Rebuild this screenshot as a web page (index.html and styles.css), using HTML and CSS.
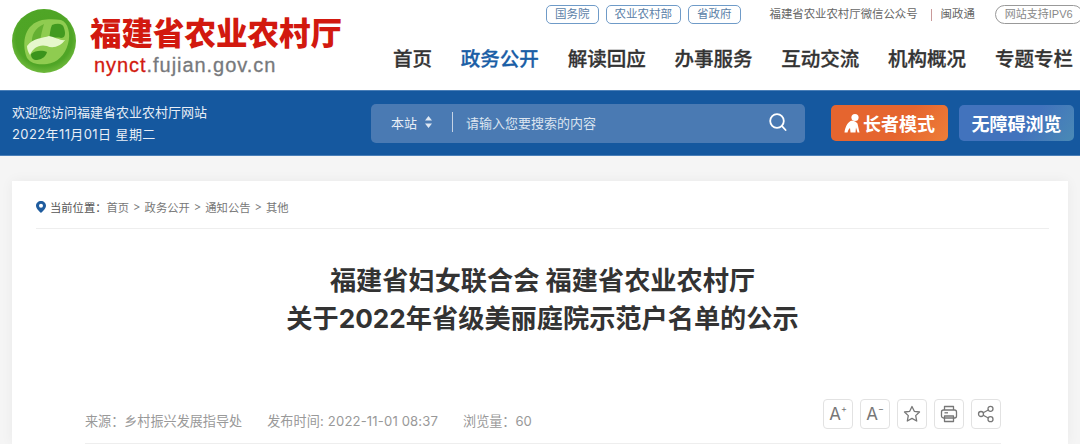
FILE: index.html
```html
<!DOCTYPE html>
<html lang="zh-CN">
<head>
    <meta charset="UTF-8">
    <title>福建省农业农村厅</title>
    <link rel="stylesheet" href="styles.css">
</head>
<body>
    <header class="top">
        <div class="logo">
            <svg class="logo-mark" width="66" height="66" viewBox="0 0 66 66">
                <defs>
                    <radialGradient id="ball" cx="50%" cy="45%" r="55%">
                        <stop offset="0" stop-color="#4ea324"/>
                        <stop offset="0.8" stop-color="#4fa526"/>
                        <stop offset="1" stop-color="#6fb93c"/>
                    </radialGradient>
                </defs>
                <circle cx="33" cy="33" r="32" fill="url(#ball)"/>
                <path d="M16 50C10 34 14 16 31 12C36 11 44 11 50 12C57 14 60 26 57 36C54 47 46 55 36 56C28 57 20 56 16 50Z" fill="#8fcc50"/>
                <path d="M41 17C46 15 52 15 53 20C55 26 54 30 50 30C46 29 42 30 38 31C39 26 39 21 41 17Z" fill="#429a20"/>
                <path d="M20 46C24 42 32 42 36 44C35 48 32 51 26 52C22 52 20 50 20 46Z" fill="#3b931c"/>
                <path d="M21 36C20 27 24 20 33 16C31 22 30 28 29 32C26 33 23 34 21 36Z" fill="#64b032"/>
                <path d="M16 38C22 30 32 30 38 28C44 29 50 33 54 32C50 38 42 41 36 38C28 36 22 40 19 47C17 44 16 41 16 38Z" fill="#e6f7cc"/>
            </svg>
            <div class="logo-text">
                <div class="logo-name">福建省农业农村厅</div>
                <div class="logo-url"><span>nynct</span>.fujian.gov.cn</div>
            </div>
        </div>
        <div class="top-right">
            <div class="links">
                <a class="pill">国务院</a>
                <a class="pill">农业农村部</a>
                <a class="pill">省政府</a>
                <span class="link wechat">福建省农业农村厅微信公众号</span>
                <span class="sep"></span>
                <span class="link">闽政通</span>
                <span class="ipv6">网站支持IPV6</span>
            </div>
            <nav class="nav">
                <a>首页</a>
                <a class="active">政务公开</a>
                <a>解读回应</a>
                <a>办事服务</a>
                <a>互动交流</a>
                <a>机构概况</a>
                <a>专题专栏</a>
            </nav>
        </div>
    </header>

    <div class="band">
        <div class="welcome">
            <div>欢迎您访问福建省农业农村厅网站</div>
            <div class="today">2022年11月01日 星期二</div>
        </div>
        <div class="search">
            <span class="scope">本站</span>
            <svg class="updown" width="7" height="12" viewBox="0 0 7 12"><path d="M3.5 0L7 4.5H0ZM3.5 12L0 7.5H7Z" fill="#dfe8f3"/></svg>
            <span class="search-line"></span>
            <span class="search-hint">请输入您要搜索的内容</span>
            <svg class="search-icon" width="20" height="20" viewBox="0 0 20 20" fill="none" stroke="#fff" stroke-width="1.8" stroke-linecap="round"><circle cx="9" cy="9" r="6.8"/><path d="M14 14.2L17.6 18"/></svg>
        </div>
        <a class="btn btn-elder">
            <svg width="17" height="20" viewBox="0 0 17 20"><circle cx="11" cy="4.5" r="3.6" fill="#fff"/><path d="M6.5 8C9 7 12 8.5 13.5 10.5L15.5 19.5H13.5L12 14.5L11.5 19.5H6.5L6 15C4.5 16 4 18 3.5 19.5H0.5C1 15 3 10 6.5 8Z" fill="#fff"/></svg>
            长者模式
        </a>
        <a class="btn btn-access">无障碍浏览</a>
    </div>

    <main class="card">
        <div class="crumb">
            <svg width="10" height="12" viewBox="0 0 10 12"><path fill-rule="evenodd" d="M5 0C2.2 0 0 2.1 0 4.8C0 8 5 12 5 12C5 12 10 8 10 4.8C10 2.1 7.8 0 5 0ZM5 2.8A2 2 0 1 1 5 6.8A2 2 0 1 1 5 2.8Z" fill="#1f5c9e"/></svg>
            <span class="crumb-label">当前位置：</span>
            <span>首页</span><i>&gt;</i><span>政务公开</span><i>&gt;</i><span>通知公告</span><i>&gt;</i><span>其他</span>
        </div>
        <h1 class="title">福建省妇女联合会 福建省农业农村厅<br>关于2022年省级美丽庭院示范户名单的公示</h1>
        <div class="meta">
            <div class="meta-text">
                <span>来源：乡村振兴发展指导处</span>
                <span class="meta-date">发布时间: 2022-11-01 08:37</span>
                <span>浏览量：60</span>
            </div>
            <div class="tools">
                <a class="tool"><span class="tool-a">A<sup>+</sup></span></a>
                <a class="tool"><span class="tool-a">A<sup>−</sup></span></a>
                <a class="tool">
                    <svg width="18" height="18" viewBox="0 0 18 18" fill="none" stroke="#777" stroke-width="1.3" stroke-linejoin="round"><path d="M9 1.5L11.3 6.3L16.5 7L12.7 10.6L13.7 16L9 13.4L4.3 16L5.3 10.6L1.5 7L6.7 6.3Z"/></svg>
                </a>
                <a class="tool">
                    <svg width="18" height="18" viewBox="0 0 18 18" fill="none" stroke="#777" stroke-width="1.3" stroke-linejoin="round"><path d="M4.5 5V1.5H13.5V5"/><rect x="1.5" y="5" width="15" height="8" rx="2"/><path d="M4.5 11H13.5V16.5H4.5Z"/><path d="M4.5 7.8H8"/></svg>
                </a>
                <a class="tool">
                    <svg width="18" height="18" viewBox="0 0 18 18" fill="none" stroke="#777" stroke-width="1.3"><circle cx="4" cy="9" r="2.5"/><circle cx="13.5" cy="3.8" r="2.5"/><circle cx="13.5" cy="14.2" r="2.5"/><path d="M6.2 7.8L11.3 5M6.2 10.2L11.3 13"/></svg>
                </a>
            </div>
        </div>
    </main>
</body>
</html>
```

FILE: styles.css
```css
* {
    box-sizing: border-box;
}
html, body {
    height: 444px;
    overflow: hidden;
}
body {
    margin: 0;
    background-color: #f5f5f5;
    font-family: "Inter", "Noto Sans CJK SC", sans-serif;
    color: #333;
}
.top {
    height: 90px;
    background: #fff;
    display: flex;
    padding-left: 11px;
}
.logo {
    flex: none;
    width: 382px;
    display: flex;
    padding-top: 8px;
}
.logo-mark {
    flex: none;
}
.logo-text {
    margin-left: 13px;
}
.logo-name {
    margin-top: 5px;
    font-family: "Noto Sans CJK SC", sans-serif;
    font-weight: 900;
    font-size: 31.5px;
    line-height: 36px;
    color: #d2190f;
    white-space: nowrap;
}
.logo-url {
    margin: 5px 0 0 4px;
    font-family: "Liberation Sans", sans-serif;
    font-size: 20px;
    line-height: 22px;
    letter-spacing: 0.95px;
    color: #77797c;
    -webkit-text-stroke: 0.3px #77797c;
}
.logo-url span {
    color: #d2190f;
    -webkit-text-stroke: 0.3px #d2190f;
}
.top-right {
    flex: 1;
}
.links {
    height: 45px;
    padding: 5px 0 0 153px;
    display: flex;
    align-items: flex-start;
    font-family: "Liberation Sans", "Noto Sans CJK SC", sans-serif;
    font-size: 11.5px;
    white-space: nowrap;
}
.pill {
    height: 19px;
    line-height: 17px;
    padding: 0 8px;
    margin-right: 7px;
    border: 1px solid #6f9bc8;
    border-radius: 5px;
    color: #5c7fa8;
}
.link {
    line-height: 18px;
    color: #666;
    font-size: 11.4px;
}
.wechat {
    margin-left: 22px;
}
.sep {
    width: 1px;
    height: 12px;
    margin: 4px 9px 0 13px;
    background: #c99a9a;
}
.ipv6 {
    margin-left: 20px;
    height: 19px;
    line-height: 17px;
    padding: 0 9px;
    border: 1px solid #999;
    border-radius: 10px;
    color: #888;
    font-size: 11px;
}
.nav {
    display: flex;
    gap: 28.8px;
    font-size: 19.5px;
    line-height: 28px;
    font-weight: 500;
    color: #333;
    white-space: nowrap;
    -webkit-text-stroke: 0.3px #333;
}
.nav .active {
    color: #1a5ea6;
    -webkit-text-stroke: 0.3px #1a5ea6;
}
.band {
    height: 66px;
    background: #15589f;
    border-top: 1px solid #4a7fb8;
    border-bottom: 1px solid #4a7fb8;
    display: flex;
    align-items: center;
    padding-left: 12px;
    color: #e8eef6;
}
.welcome {
    width: 359px;
    font-size: 13px;
    line-height: 22px;
}
.today {
    letter-spacing: 0.4px;
}
.search {
    width: 434px;
    height: 39px;
    background: #4a7ab3;
    border-radius: 5px;
    display: flex;
    align-items: center;
    padding: 0 17px 2px 20px;
    font-size: 13px;
}
.updown {
    margin-left: 8px;
}
.search-line {
    width: 1px;
    height: 20px;
    margin: 0 13px 0 20px;
    background: #c5d3e5;
}
.search-hint {
    color: #dce5f0;
}
.search-icon {
    margin-left: auto;
}
.btn {
    height: 36px;
    border-radius: 5px;
    display: flex;
    align-items: center;
    justify-content: center;
    color: #fff;
    font-size: 18px;
    font-weight: 700;
    white-space: nowrap;
}
.btn-elder {
    width: 117px;
    margin-left: 26px;
    gap: 2px;
    background: linear-gradient(125deg, #e5652f 60%, #ee7e38);
}
.btn-access {
    width: 115px;
    margin-left: 11px;
    background: linear-gradient(125deg, #4273bd 60%, #4a8ab5);
}
.card {
    width: 1056px;
    height: 263px;
    margin: 25px 0 0 12px;
    padding: 0 19px 0 24px;
    background: #fff;
    box-shadow: 0 0 12px rgba(0,0,0,0.05);
}
.crumb {
    height: 48px;
    display: flex;
    align-items: center;
    gap: 4px;
    border-bottom: 1px solid #eee;
    font-size: 11.3px;
    color: #777;
    padding-top: 5px;
}
.crumb svg {
    margin-right: 0;
}
.crumb-label {
    color: #555;
    margin-right: -4px;
}
.crumb i {
    font-style: normal;
}
.title {
    margin: 33px 0 0;
    text-align: center;
    font-size: 26.2px;
    line-height: 38px;
    font-weight: 700;
    color: #333;
}
.meta {
    margin-top: 61px;
    margin-left: 49px;
    height: 45px;
    display: flex;
    justify-content: space-between;
    align-items: flex-start;
    border-bottom: 1px solid #eee;
    width: 916px;
    font-size: 13.1px;
    color: #999;
}
.meta-text {
    display: flex;
    gap: 25px;
    margin-top: 12px;
}
.meta-date {
    letter-spacing: 0.15px;
}
.tools {
    display: flex;
    gap: 7px;
}
.tool {
    width: 30px;
    height: 30px;
    border: 1px solid #e2e2e2;
    border-radius: 4px;
    display: flex;
    align-items: center;
    justify-content: center;
    color: #777;
}
.tool-a {
    font-size: 17px;
    line-height: 20px;
    display: flex;
}
.tool-a sup {
    font-size: 9px;
    line-height: 10px;
}
```
